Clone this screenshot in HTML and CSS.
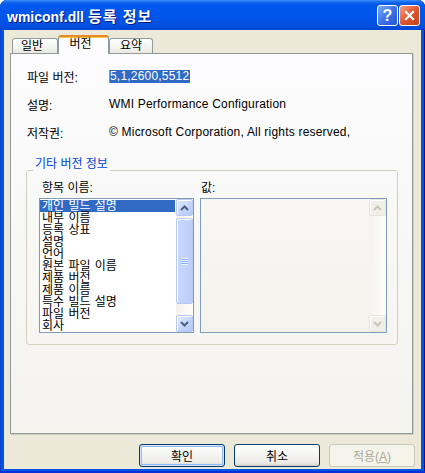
FILE: index.html
```html
<!DOCTYPE html>
<html lang="ko">
<head>
    <meta charset="UTF-8">
    <title>wmiconf.dll 등록 정보</title>
    <link rel="stylesheet" href="styles.css">
</head>
<body>
    <div class="window">
        <div class="titlebar">
            <span class="title">wmiconf.dll <span class="title-ko">등록 정보</span></span>
            <div class="caption-btns">
                <div class="cap-btn help">?</div>
                <div class="cap-btn close">
                    <svg width="11" height="11" viewBox="0 0 11 11"><path d="M2 2 L9 9 M9 2 L2 9" stroke="#fff" stroke-width="2.2" stroke-linecap="square"/></svg>
                </div>
            </div>
        </div>

        <div class="client">
            <div class="tabs">
                <div class="tab tab-general">일반</div>
                <div class="tab tab-version active">버전</div>
                <div class="tab tab-summary">요약</div>
            </div>

            <div class="panel">
                <div class="field">
                    <span class="field-label">파일 버전:</span>
                    <span class="field-value"><span class="selected">5,1,2600,5512</span></span>
                </div>
                <div class="field">
                    <span class="field-label">설명:</span>
                    <span class="field-value">WMI Performance Configuration</span>
                </div>
                <div class="field">
                    <span class="field-label">저작권:</span>
                    <span class="field-value">© Microsoft Corporation, All rights reserved,</span>
                </div>

                <fieldset class="group">
                    <legend>기타 버전 정보</legend>
                    <div class="cols">
                        <div class="col">
                            <div class="col-label">항목 이름:</div>
                            <div class="listbox">
                                <div class="items">
                                    <div class="item sel">개인 빌드 설명</div>
                                    <div class="item">내부 이름</div>
                                    <div class="item">등록 상표</div>
                                    <div class="item">설명</div>
                                    <div class="item">언어</div>
                                    <div class="item">원본 파일 이름</div>
                                    <div class="item">제품 버전</div>
                                    <div class="item">제품 이름</div>
                                    <div class="item">특수 빌드 설명</div>
                                    <div class="item">파일 버전</div>
                                    <div class="item">회사</div>
                                </div>
                                <div class="scrollbar">
                                    <div class="sb-btn">
                                        <svg width="9" height="6" viewBox="0 0 9 6"><path d="M1 5 L4.5 1.5 L8 5" fill="none" stroke="#4D6185" stroke-width="2"/></svg>
                                    </div>
                                    <div class="sb-track">
                                        <div class="sb-thumb"><span class="grip"></span></div>
                                    </div>
                                    <div class="sb-btn">
                                        <svg width="9" height="6" viewBox="0 0 9 6"><path d="M1 1 L4.5 4.5 L8 1" fill="none" stroke="#4D6185" stroke-width="2"/></svg>
                                    </div>
                                </div>
                            </div>
                        </div>
                        <div class="col">
                            <div class="col-label value-label">값:</div>
                            <div class="valuebox">
                                <div class="items"></div>
                                <div class="scrollbar disabled">
                                    <div class="sb-btn">
                                        <svg width="9" height="6" viewBox="0 0 9 6"><path d="M1 5 L4.5 1.5 L8 5" fill="none" stroke="#C9C7BA" stroke-width="2"/></svg>
                                    </div>
                                    <div class="sb-track"></div>
                                    <div class="sb-btn">
                                        <svg width="9" height="6" viewBox="0 0 9 6"><path d="M1 1 L4.5 4.5 L8 1" fill="none" stroke="#C9C7BA" stroke-width="2"/></svg>
                                    </div>
                                </div>
                            </div>
                        </div>
                    </div>
                </fieldset>
            </div>

            <div class="buttons">
                <button class="btn default">확인</button>
                <button class="btn">취소</button>
                <button class="btn" disabled>적용(<u>A</u>)</button>
            </div>
        </div>
    </div>
</body>
</html>
```

FILE: styles.css
```css
* {
    margin: 0;
    padding: 0;
    box-sizing: border-box;
}

body {
    width: 425px;
    height: 473px;
    overflow: hidden;
    background: #fff;
    font-family: "Liberation Sans", "Noto Sans CJK KR", sans-serif;
    font-size: 12px;
    color: #000;
}

.window {
    width: 425px;
    height: 473px;
    display: flex;
    flex-direction: column;
    background: #0055E5;
    border-radius: 7px 7px 0 0;
    box-shadow: inset 0 -2px #0831D9, inset 1px 0 #0842C8, inset -1px 0 #00138C;
    overflow: hidden;
}

.titlebar {
    height: 30px;
    flex: none;
    display: flex;
    align-items: center;
    justify-content: space-between;
    padding: 0 5px 0 7px;
    background: linear-gradient(to bottom, #3C8EF9 0, #0A5EEC 3px, #0058EE 6px, #0055EA 50%, #0050E0 85%, #0046D4 100%);
    border-radius: 7px 7px 0 0;
}

.title {
    color: #fff;
    font-weight: bold;
    font-size: 14px;
    text-shadow: 1px 1px #0A1883;
    padding-top: 1px;
}

.title-ko {
    font-size: 15px;
    letter-spacing: 1px;
}

.caption-btns {
    display: flex;
    gap: 1px;
}

.cap-btn {
    width: 21px;
    height: 21px;
    border: 1px solid #fff;
    border-radius: 3px;
    display: flex;
    align-items: center;
    justify-content: center;
}

.help {
    background: linear-gradient(135deg, #7AAAFB, #3A6FE6 55%, #2356D0);
    color: #fff;
    font-weight: bold;
    font-size: 16px;
    line-height: 19px;
}

.close {
    background: linear-gradient(135deg, #F3A385, #E0572F 50%, #C4401C);
}

.client {
    flex: 1;
    margin: 0 4px 4px;
    background: #ECE9D8;
    display: flex;
    flex-direction: column;
}

/* tabs */
.tabs {
    display: flex;
    align-items: flex-end;
    height: 18px;
    margin-top: 5px;
    padding-left: 8px;
    position: relative;
    z-index: 1;
}

.tab {
    height: 15px;
    border: 1px solid #919B9C;
    border-bottom: none;
    border-radius: 3px 3px 0 0;
    background: linear-gradient(#FFFFFF, #F3F3EF 60%, #E9E8E1);
    text-align: center;
    line-height: 14px;
}

.tab-general { width: 46px; padding-right: 6px; }
.tab-version { width: 51px; padding-right: 6px; }
.tab-summary { width: 44px; }

.tab.active {
    height: 19px;
    margin-bottom: -1px;
    background: #FCFCFE;
    border-top: 2px solid #E68B2C;
    box-shadow: inset 0 1px #FFC83C;
    line-height: 15px;
}

/* panel */
.panel {
    height: 381px;
    margin: 0 8px 0 6px;
    border: 1px solid #919B9C;
    background: linear-gradient(#FCFCFE, #F4F3EE);
    box-shadow: 1px 1px 0 #D0CEBF;
    padding-top: 8px;
}

.field {
    display: flex;
    align-items: center;
    height: 28px;
    padding-left: 16px;
}

.field-label {
    width: 82px;
    flex: none;
}

.field-value {
    letter-spacing: 0.2px;
}

.selected {
    display: inline-block;
    background: #316AC5;
    color: #fff;
    line-height: 13px;
    border-left: 1px solid #C08A3A;
    padding-right: 1px;
}

/* group box */
.group {
    margin: 12px 14px 0 15px;
    border: 1px solid #D0D0BF;
    border-radius: 3px;
    padding: 0 10px 11px 12px;
}

.group legend {
    color: #0046D5;
    line-height: 12px;
    padding: 0 2px 12px;
    margin-left: -6px;
}

.cols {
    display: flex;
    gap: 6px;
}

.col-label {
    height: 16px;
    line-height: 12px;
    padding-left: 3px;
}

.value-label {
    padding-left: 1px;
}

.listbox,
.valuebox {
    height: 135px;
    border: 1px solid #7F9DB9;
    display: flex;
}

.listbox {
    width: 155px;
    background: #fff;
}

.valuebox {
    width: 187px;
    background: linear-gradient(#F8F7F4, #F3F2EC);
}

.items {
    flex: 1;
    padding: 1px 1px 0 0;
    overflow: hidden;
}

.item {
    height: 12px;
    line-height: 12px;
    padding-left: 2px;
    white-space: nowrap;
    word-spacing: 1px;
}

.item.sel {
    background: #316AC5;
    color: #fff;
}

/* scrollbar */
.scrollbar {
    width: 17px;
    flex: none;
    display: flex;
    flex-direction: column;
    background: linear-gradient(to right, #F3F1EC, #FEFEFB);
}

.sb-btn {
    height: 17px;
    flex: none;
    border: 1px solid #B8C9F2;
    border-radius: 2px;
    background: linear-gradient(135deg, #E4EBFD, #C3D3FB 60%, #B4C8F6);
    box-shadow: inset 1px 1px #fff;
    display: flex;
    align-items: center;
    justify-content: center;
}

.sb-track {
    flex: 1;
}

.sb-thumb {
    height: 86px;
    margin-top: 2px;
    border: 1px solid #B8C9F2;
    border-radius: 2px;
    background: linear-gradient(to right, #C9D8FC, #BCCEF8);
    box-shadow: inset 1px 1px #fff;
    display: flex;
    align-items: center;
    justify-content: center;
}

.grip {
    width: 7px;
    height: 7px;
    background: repeating-linear-gradient(#EEF4FE 0, #EEF4FE 1px, #8CB0F8 1px, #8CB0F8 2px);
}

.scrollbar.disabled {
    background: linear-gradient(to right, #F4F3EE, #FEFEFB);
}

.scrollbar.disabled .sb-btn {
    border-color: #E8E6DC;
    background: #F0EFE8;
}

/* dialog buttons */
.buttons {
    display: flex;
    justify-content: flex-end;
    gap: 9px;
    margin-top: 10px;
    padding-right: 6px;
}

.btn {
    width: 86px;
    height: 23px;
    border: 1px solid #003C74;
    border-radius: 3px;
    background: linear-gradient(#FFFFFF, #F4F4F0 50%, #ECEBE6 85%, #D6D0C5);
    font: inherit;
    color: #000;
}

.btn.default {
    box-shadow: inset 0 0 0 1px #CEE7FF, inset 0 0 0 2px #98B8EA;
}

.btn:disabled {
    border-color: #C9C7BA;
    color: #ACA899;
    background: #F5F4EA;
}
```
